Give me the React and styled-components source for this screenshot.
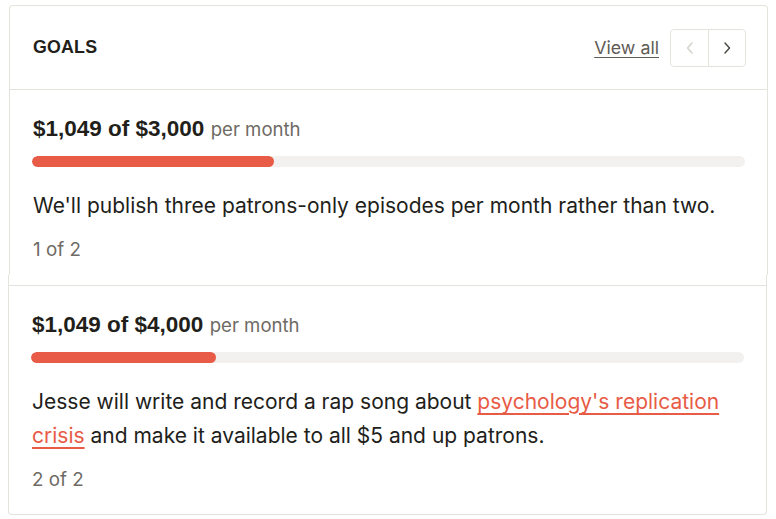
import React from "react"
import styled, { createGlobalStyle } from "styled-components"

const GlobalStyle = createGlobalStyle`
    body {
        margin: 0;
        background: #ffffff;
        font-family: Inter, "Liberation Sans", Arial, sans-serif;
        color: #221e1a;
    }
`

const Page = styled.div`
    padding-top: 5px;
    width: 776px;
`

const Card = styled.section`
    box-sizing: border-box;
    width: 759px;
    margin-left: ${(p) => p.$shift}px;
    border: 1px solid #e5e3dd;
    border-top: ${(p) => (p.$top ? "1px solid #e5e3dd" : "none")};
    border-bottom: ${(p) => (p.$top ? "none" : "1px solid #e5e3dd")};
    border-radius: ${(p) => (p.$top ? "4px 4px 0 0" : "0 0 4px 4px")};
    padding-top: ${(p) => (p.$top ? 0 : 10)}px;
    background: #ffffff;
`

const Header = styled.header`
    display: flex;
    align-items: center;
    justify-content: space-between;
    height: 83px;
    padding: 0 21px 0 23px;
    border-bottom: 1px solid #e5e3dd;
`

const Title = styled.h2`
    margin: 0;
    font-family: "Liberation Sans", Arial, sans-serif;
    font-size: 17.8px;
    font-weight: 700;
    letter-spacing: 0.2px;
`

const Actions = styled.div`
    display: flex;
    align-items: center;
    gap: 11px;
`

const ViewAll = styled.a`
    font-size: 17.8px;
    color: #5f5b55;
    text-decoration: underline;
    text-underline-offset: 3px;
    text-decoration-thickness: 1px;
`

const Pager = styled.div`
    display: flex;
    height: 38px;
    box-sizing: border-box;
    border: 1px solid #e5e3dd;
    border-radius: 4px;
`

const PagerButton = styled.button`
    width: 37px;
    height: 100%;
    display: flex;
    align-items: center;
    justify-content: center;
    padding: 0;
    border: none;
    background: transparent;
    color: ${(p) => (p.disabled ? "#d3d0ca" : "#4a4640")};
    & + & {
        border-left: 1px solid #e5e3dd;
    }
`

const Slide = styled.div`
    padding: 25px 22px ${(p) => p.$bottom}px 22px;
    border-top: ${(p) => (p.$divider ? "1px solid #e5e3dd" : "none")};
`

const Amount = styled.div`
    font-family: "Liberation Sans", Arial, sans-serif;
    font-size: 22.5px;
    line-height: 28px;
    font-weight: 700;
    padding-left: 1px;
    span {
        font-family: Inter, "Liberation Sans", Arial, sans-serif;
        font-weight: 400;
        font-size: 18.6px;
        line-height: 1;
        color: #6e6a64;
    }
`

const Track = styled.div`
    margin-top: 13px;
    height: 11px;
    border-radius: 6px;
    background: #f2f1ef;
    overflow: hidden;
`

const Fill = styled.div`
    height: 100%;
    border-radius: 6px;
    background: #e85b46;
`

const Description = styled.p`
    margin: 22px 0 0;
    padding-left: 1px;
    font-size: 21px;
    line-height: 34px;
    a {
        color: #e85b46;
        text-decoration: underline;
        text-underline-offset: 4px;
    }
`

const Counter = styled.div`
    margin-top: 15px;
    padding-left: 1px;
    font-size: 18.8px;
    line-height: 24px;
    color: #6e6a64;
`

const Chevron = ({ dir }) => (
    <svg width="12" height="14" viewBox="0 0 12 14" fill="none">
        <path
            d={dir === "left" ? "M8 2 3.5 7 8 12" : "M4 2 8.5 7 4 12"}
            stroke="currentColor"
            strokeWidth="1.4"
            strokeLinecap="round"
            strokeLinejoin="round"
        />
    </svg>
)

const goals = [
    {
        goal: "$3,000",
        pct: 34,
        text: <>We'll publish three patrons-only episodes per month rather than two.</>,
    },
    {
        goal: "$4,000",
        pct: 26,
        text: (
            <>
                Jesse will write and record a rap song about{" "}
                <a href="#">psychology's replication crisis</a> and make it available to all $5 and up patrons.
            </>
        ),
    },
]

function Goal({ item, index, divider, bottom }) {
    return (
        <Slide $divider={divider} $bottom={bottom}>
            <Amount>
                $1,049 of {item.goal} <span>per month</span>
            </Amount>
            <Track>
                <Fill style={{ width: `${item.pct}%` }} />
            </Track>
            <Description>{item.text}</Description>
            <Counter>
                {index + 1} of {goals.length}
            </Counter>
        </Slide>
    )
}

export default function App() {
    return (
        <>
            <GlobalStyle />
            <Page>
                <Card $top $shift={9}>
                    <Header>
                        <Title>GOALS</Title>
                        <Actions>
                            <ViewAll href="#">View all</ViewAll>
                            <Pager>
                                <PagerButton disabled>
                                    <Chevron dir="left" />
                                </PagerButton>
                                <PagerButton>
                                    <Chevron dir="right" />
                                </PagerButton>
                            </Pager>
                        </Actions>
                    </Header>
                    <Goal item={goals[0]} index={0} bottom={13} />
                </Card>
                <Card $shift={8}>
                    <Goal item={goals[1]} index={1} divider bottom={22} />
                </Card>
            </Page>
        </>
    )
}
